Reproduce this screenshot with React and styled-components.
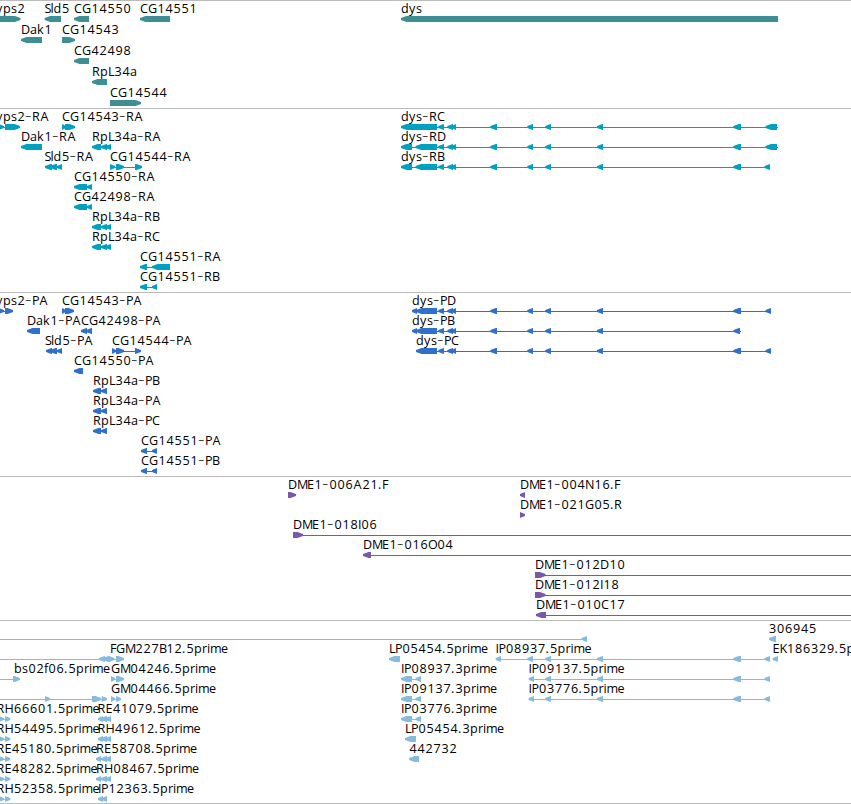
import React from "react";
import styled, { createGlobalStyle } from "styled-components";

const GlobalStyle = createGlobalStyle`
  body {
    margin: 0;
    background: #fff;
    overflow: hidden;
  }
`;

const Browser = styled.main`
  display: flex;
  flex-direction: column;
  width: 851px;
  height: 803px;
  border-bottom: 1px solid #bbb;
  overflow: hidden;
`;

const Track = styled.section`
  display: flex;
  flex-direction: column;
  flex: none;
  box-sizing: border-box;
  height: ${(props) => props.$height}px;
  border-top: 1px solid #bbb;
  color: ${(props) => props.$color};
`;

const Lane = styled.svg`
  display: block;
  flex: none;
  width: 100%;
  height: ${(props) => props.$height}px;
  overflow: visible;
`;

const Label = styled.text`
  fill: #000;
  font-family: "Open Sans", "DejaVu Sans", sans-serif;
  font-size: 12.6px;
`;

// The hyphen is set larger and lighter, so that it fills its cell
const Hyphen = styled.tspan`
  font-family: "DejaVu Sans", sans-serif;
  font-size: 18px;
  font-weight: 200;
`;

// Horizontal advance of each character, 8px when not listed
const ADVANCE = {
  A: 9, B: 7, D: 9, E: 7, F: 6, G: 9, H: 9, I: 3, K: 7, L: 6, M: 10, N: 9, O: 9,
  P: 7, S: 6, a: 7, e: 7, f: 4, i: 3, k: 7, l: 3, m: 11, r: 5, s: 6, v: 7, y: 7,
  "-": 7, ".": 4,
};

// Splits a name at its hyphen, with the x of every character
const layoutName = (name, start) => {
  let x = start;
  return name.split(/(-)/).map((text) => {
    const xs = text.split("").map((c) => {
      const advance = ADVANCE[c] || 8;
      const at = /[\dA]/.test(c) ? x + 0.5 : x;
      x += advance;
      return at;
    });
    return { text, xs: xs.join(" ") };
  });
};

const HEAD = 5.5;

// One exon, with its arrow head on the side it is read towards
const exonPath = ([from, to], dir) => {
  const head = Math.min(HEAD, to - from);
  if (dir === "R") {
    return `M${from} 15H${to - head}L${to} 17V19L${to - head} 21H${from}Z`;
  }
  return `M${to} 15H${from + head}L${from} 17V19L${from + head} 21H${to}Z`;
};

const Feature = ({ name, x, dir, exons, line }) => (
  <g>
    {line && (
      <rect x={line[0]} y="18" width={line[1] - line[0]} height="1" fill="currentColor" />
    )}
    {exons.map((exon, index) => (
      <path key={index} d={exonPath(exon, dir)} fill="currentColor" />
    ))}
    {name && (
      <Label y="12">
        {layoutName(name, x).map((part, index) =>
          part.text === "-" ? (
            <Hyphen key={index} x={part.xs}>-</Hyphen>
          ) : (
            <tspan key={index} x={part.xs}>{part.text}</tspan>
          )
        )}
      </Label>
    )}
  </g>
);

// name, label x, direction, exons, connecting line
const f = (name, x, dir, exons, line) => ({ name, x, dir, exons, line });

// Exons that several dys transcripts share
const near = [[438.3, 444], [447.3, 453], [451.5, 456]];
const far = [[545.2, 551], [597, 603]];
const mid = [[490.3, 497], [527.3, 533], ...far];
const e733 = [733.3, 741];
const e765 = [764.5, 770];

const rplR = [[92, 101], [101, 107], [105.5, 111]];
const rplP = [[93, 101], [101, 107]];
const cg144 = [[110, 115], [116, 124], [135, 142]];
const ip3 = [[401, 412], [415.5, 421]];
const reads98 = [[98, 103], [101, 107], [105.5, 111]];
const reads96 = [[96, 101], [101, 107], [105.5, 111]];
const leftReads = [[-2, 4], [5, 10.3]];

const tracks = [
  {
    color: "#3d8f94",
    height: 108,
    lane: 21,
    rows: [
      [
        f("vps2", -4, "R", [[-5, 20.5]]),
        f("Sld5", 44.4, "L", [[44.7, 61]]),
        f("CG14550", 74, "L", [[74, 89]]),
        f("CG14551", 140, "L", [[140, 170]]),
        f("dys", 401, "L", [[401, 778]]),
      ],
      [f("Dak1", 21, "L", [[21, 42]]), f("CG14543", 62, "R", [[62, 75]])],
      [f("CG42498", 74, "L", [[74, 89]])],
      [f("RpL34a", 92, "L", [[92, 107]])],
      [f("CG14544", 110, "R", [[110, 141]])],
    ],
  },
  {
    color: "#00a0c0",
    height: 184,
    lane: 20,
    rows: [
      [
        f("vps2-RA", -4, "R", [[-2, 4], [5, 20]], [0, 20]),
        f("CG14543-RA", 62, "R", [[62, 66], [65, 75]]),
        f("dys-RC", 401, "L", [[401, 437], ...near, ...mid, e733, [765.5, 777]], [401, 778]),
      ],
      [
        f("Dak1-RA", 21, "L", [[21, 42]]),
        f("RpL34a-RA", 92, "L", rplR, [92, 111]),
        f("dys-RD", 401, "L", [[401, 412], [415.5, 437], ...near, ...mid, e733, [765.5, 777]], [401, 778]),
      ],
      [
        f("Sld5-RA", 44.4, "L", [[45, 52], [50, 57], [57, 62]], [45, 62]),
        f("CG14544-RA", 110, "R", cg144, [110, 142]),
        f("dys-RB", 401, "L", [[401, 412], [415.5, 437], ...near, ...mid, e733, e765], [401, 770]),
      ],
      [f("CG14550-RA", 74, "L", [[74, 87], [87, 92]])],
      [f("CG42498-RA", 74, "L", [[74, 87], [87, 92]])],
      [f("RpL34a-RB", 92, "L", rplR, [92, 111])],
      [f("RpL34a-RC", 92, "L", rplR, [92, 111])],
      [f("CG14551-RA", 140, "L", [[140, 147], [152, 170]], [140, 170])],
      [f("CG14551-RB", 140, "L", [[140, 147], [152, 157]], [140, 157])],
    ],
  },
  {
    color: "#306fcc",
    height: 184,
    lane: 20,
    rows: [
      [
        f("vps2-PA", -4, "R", [[-2, 4], [5, 13]], [0, 13]),
        f("CG14543-PA", 62, "R", [[62, 66], [65, 74]]),
        f("dys-PD", 412, "L", [[412, 417], [416, 437], ...near, ...mid, e733, [765.5, 771]], [412, 771]),
      ],
      [
        f("Dak1-PA", 27, "L", [[27, 40]]),
        f("CG42498-PA", 81, "L", [[81, 87], [86, 92]]),
        f("dys-PB", 412, "L", [[412, 417], [416, 437], ...near, ...mid, [733.5, 740]], [412, 741]),
      ],
      [
        f("Sld5-PA", 45, "L", [[46, 52], [50, 57], [57, 62]], [46, 62]),
        f("CG14544-PA", 112, "R", [[112, 116], [116, 124], [135, 141]], [112, 141]),
        f("dys-PC", 416, "L", [[416, 437], ...near, ...mid, e733, [765.5, 771]], [416, 771]),
      ],
      [f("CG14550-PA", 74, "L", [[74, 83]])],
      [f("RpL34a-PB", 93, "L", rplP)],
      [f("RpL34a-PA", 93, "L", rplP)],
      [f("RpL34a-PC", 93, "L", rplP)],
      [f("CG14551-PA", 141, "L", [[141, 147], [152, 157]], [141, 157])],
      [f("CG14551-PB", 141, "L", [[141, 147], [152, 157]], [141, 157])],
    ],
  },
  {
    color: "#7958a9",
    height: 144,
    lane: 20,
    rows: [
      [
        f("DME1-006A21.F", 288, "R", [[288, 296]]),
        f("DME1-004N16.F", 520, "L", [[520, 525]]),
      ],
      [f("DME1-021G05.R", 520, "R", [[520, 525]])],
      [f("DME1-018I06", 293, "R", [[293, 303]], [293, 851])],
      [f("DME1-016O04", 363, "L", [[363, 371]], [363, 851])],
      [f("DME1-012D10", 535, "R", [[535, 545.5]], [535, 851])],
      [f("DME1-012I18", 535, "R", [[535, 545.5]], [535, 851])],
      [f("DME1-010C17", 536, "L", [[536, 546]], [536, 851])],
    ],
  },
  {
    color: "#86bbdd",
    height: 183,
    lane: 20,
    rows: [
      [f("", 0, "L", [[581.5, 587]], [0, 587]), f("306945", 768.6, "L", [[769, 776]])],
      [
        f("", 0, "L", [[99, 105], [103, 109]], [0, 109]),
        f("FGM227B12.5prime", 110, "R", [[109, 114.5], [116, 124]], [109, 124]),
        f("LP05454.5prime", 389, "L", [[389, 400]]),
        f("IP08937.5prime", 495.6, "L", [[495.7, 501], [527.3, 533], ...far, e733, e765], [496, 770]),
        f("EK186329.5prime", 772.6, "L", [[772.7, 778]]),
      ],
      [
        f("bs02f06.5prime", 14, "R", [[13, 20]], [0, 20]),
        f("GM04246.5prime", 111, "R", [[111, 115], [116, 124]], [111, 124]),
        f("IP08937.3prime", 401, "L", ip3, [401, 421]),
        f("IP09137.5prime", 528.6, "L", [[528.7, 534], ...far, e733, e765], [529, 770]),
      ],
      [
        f("", 0, "R", [[45, 50], [92, 101], [101.7, 107]], [0, 107]),
        f("GM04466.5prime", 111, "R", [[111, 115], [116, 121]], [111, 121]),
        f("IP09137.3prime", 401, "L", ip3, [401, 421]),
        f("IP03776.5prime", 528.6, "L", [[528.7, 534], ...far, e733, e765], [529, 770]),
      ],
      [
        f("RH66601.5prime", -3.4, "R", leftReads, [0, 10]),
        f("RE41079.5prime", 97.6, "L", reads98),
        f("IP03776.3prime", 401, "L", ip3, [401, 421]),
      ],
      [
        f("RH54495.5prime", -3.4, "R", leftReads, [0, 10]),
        f("RH49612.5prime", 97.6, "L", reads98),
        f("LP05454.3prime", 405, "L", [[405, 416]]),
      ],
      [
        f("RE45180.5prime", -3.4, "R", leftReads, [0, 10]),
        f("RE58708.5prime", 96, "L", reads96, [96, 111]),
        f("442732", 409, "L", [[409, 419]]),
      ],
      [
        f("RE48282.5prime", -3.4, "R", leftReads, [0, 10]),
        f("RH08467.5prime", 96, "L", reads96, [96, 111]),
      ],
      [
        f("RH52358.5prime", -3.4, "R", leftReads, [0, 10]),
        f("IP12363.5prime", 98, "L", [[98, 103], [102, 107]]),
      ],
    ],
  },
];

function App() {
  return (
    <>
      <GlobalStyle />
      <Browser>
        {tracks.map((track, index) => (
          <Track key={index} $height={track.height} $color={track.color}>
            {track.rows.map((row, rowIndex) => (
              <Lane key={rowIndex} $height={track.lane}>
                {row.map((feature, i) => (
                  <Feature key={i} {...feature} />
                ))}
              </Lane>
            ))}
          </Track>
        ))}
      </Browser>
    </>
  );
}

export default App;
